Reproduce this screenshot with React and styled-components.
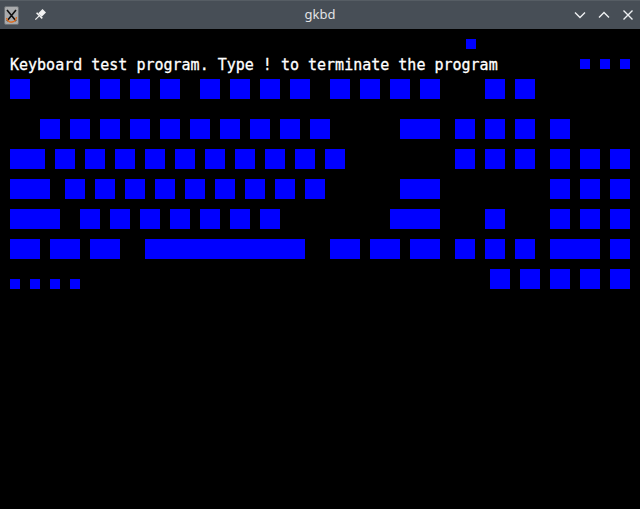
import React from "react";
import styled, { createGlobalStyle } from "styled-components";

const Global = createGlobalStyle`
  html, body { margin: 0; padding: 0; background: #000; }
  #root { width: 640px; height: 509px; overflow: hidden; }
`;

const Window = styled.div`
  width: 640px;
  height: 509px;
  display: flex;
  flex-direction: column;
  background: #000;
`;

const TitleBar = styled.div`
  height: 29px;
  flex: none;
  background: #474e56;
  border-top: 1px solid #565d64;
  box-sizing: border-box;
  display: flex;
  align-items: center;
  position: relative;
  padding: 0 6px 0 4px;
`;

const LeftIcons = styled.div`
  display: flex;
  align-items: center;
  gap: 14px;
`;

const Title = styled.div`
  position: absolute;
  left: 0;
  right: 0;
  text-align: center;
  font-family: "Noto Sans", sans-serif;
  font-size: 13px;
  color: #e2e4e6;
  pointer-events: none;
  top: 4px;
`;

const RightButtons = styled.div`
  margin-left: auto;
  display: flex;
  align-items: center;
  gap: 12px;
`;

const Canvas = styled.div`
  position: relative;
  flex: 1;
  background: #000;
`;

const Message = styled.div`
  padding: 29px 0 0 10px;
  font-family: "DejaVu Sans Mono", "Liberation Mono", monospace;
  font-size: 15px;
  line-height: 15px;
  color: #fff;
  white-space: pre;
  -webkit-text-stroke: 0.3px #fff;
`;

const Key = styled.div`
  position: absolute;
  background: #0000ff;
`;

const TOP = 29;
const row = (y, items) => items.map(([x, w = 20, h = 20]) => [x, y, w, h]);

const keys = [
  [466, 39, 10, 10],
  [580, 59, 10, 10],
  [600, 59, 10, 10],
  [620, 59, 10, 10],
  ...row(79, [[10], [70], [100], [130], [160], [200], [230], [260], [290], [330], [360], [390], [420], [485], [515]]),
  ...row(119, [[40], [70], [100], [130], [160], [190], [220], [250], [280], [310], [400, 40], [455], [485], [515], [550]]),
  ...row(149, [[10, 35], [55], [85], [115], [145], [175], [205], [235], [265], [295], [325], [455], [485], [515], [550], [580], [610]]),
  ...row(179, [[10, 40], [65], [95], [125], [155], [185], [215], [245], [275], [305], [400, 40], [550], [580], [610]]),
  ...row(209, [[10, 50], [80], [110], [140], [170], [200], [230], [260], [390, 50], [485], [550], [580], [610]]),
  ...row(239, [[10, 30], [50, 30], [90, 30], [145, 160], [330, 30], [370, 30], [410, 30], [455], [485], [515], [550, 50], [610]]),
  ...row(269, [[490], [520], [550], [580], [610]]),
  ...row(279, [[10, 10, 10], [30, 10, 10], [50, 10, 10], [70, 10, 10]]),
];

const AppIcon = () => (
  <svg width="15" height="19" viewBox="0 0 15 19">
    <rect x="0.5" y="0.5" width="14" height="18" rx="1.5" fill="#a9abad" stroke="#6c7176" />
    <path d="M3 4 L12 15 M12 4 L3 15" stroke="#111" strokeWidth="1.6" />
    <path d="M2.5 12 Q4 16.5 8 16 Q12 15.5 12.5 11" stroke="#e06a1a" strokeWidth="1.3" fill="none" />
  </svg>
);

const PinIcon = () => (
  <svg width="14" height="14" viewBox="0 0 14 14">
    <g transform="rotate(45 7 7)">
      <rect x="4.5" y="1" width="5" height="6" fill="#f2f2f2" />
      <rect x="3" y="7" width="8" height="1.6" fill="#f2f2f2" />
      <rect x="6.4" y="8.6" width="1.2" height="5" fill="#f2f2f2" />
    </g>
  </svg>
);

const Chevron = ({ up }) => (
  <svg width="12" height="12" viewBox="0 0 12 12">
    <path d={up ? "M1 8.5 L6 3.5 L11 8.5" : "M1 3.5 L6 8.5 L11 3.5"} stroke="#eef0f2" strokeWidth="1.4" fill="none" />
  </svg>
);

const CloseIcon = () => (
  <svg width="12" height="12" viewBox="0 0 12 12">
    <path d="M1.5 1.5 L10.5 10.5 M10.5 1.5 L1.5 10.5" stroke="#eef0f2" strokeWidth="1.4" fill="none" />
  </svg>
);

export default function App() {
  return (
    <>
      <Global />
      <Window>
        <TitleBar>
          <LeftIcons>
            <AppIcon />
            <PinIcon />
          </LeftIcons>
          <Title>gkbd</Title>
          <RightButtons>
            <Chevron />
            <Chevron up />
            <CloseIcon />
          </RightButtons>
        </TitleBar>
        <Canvas>
          <Message>Keyboard test program. Type ! to terminate the program</Message>
          {keys.map(([x, y, w, h], i) => (
            <Key key={i} style={{ left: x, top: y - TOP, width: w, height: h }} />
          ))}
        </Canvas>
      </Window>
    </>
  );
}
